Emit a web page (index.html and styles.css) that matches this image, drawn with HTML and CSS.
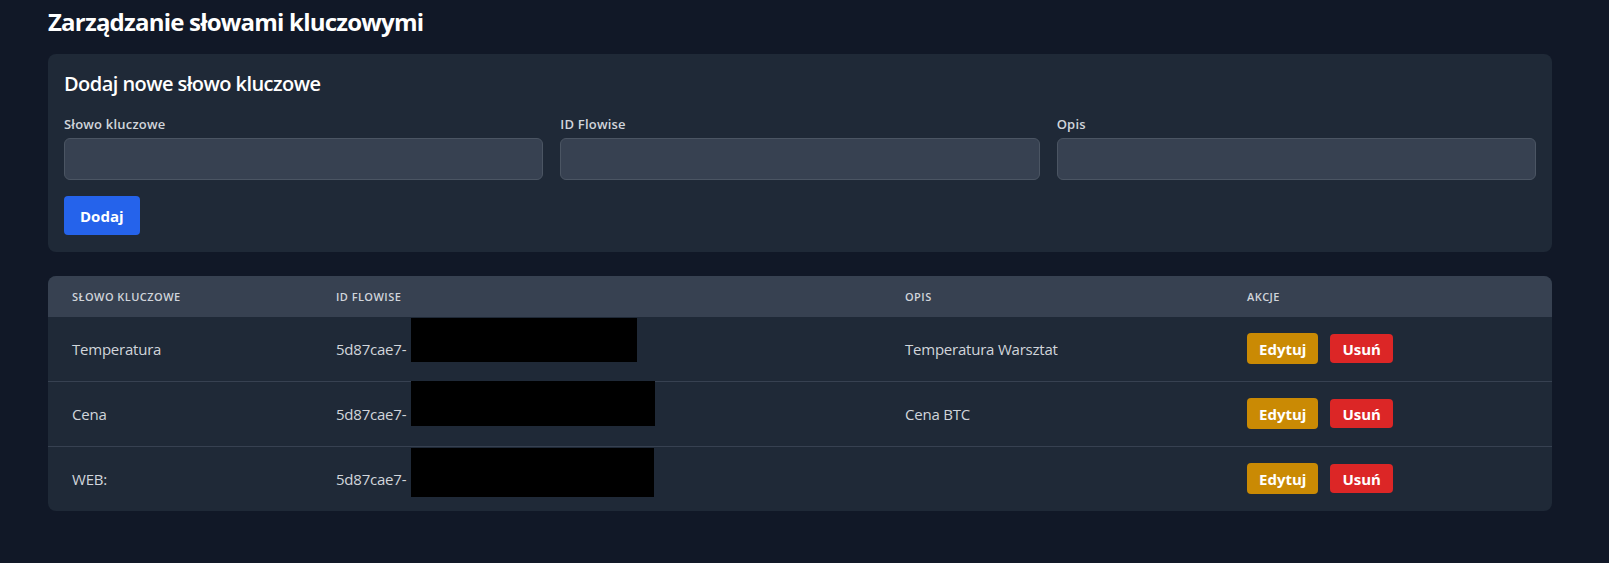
FILE: index.html
```html
<!DOCTYPE html>
<html lang="pl">
<head>
<meta charset="utf-8">
<title>Zarządzanie słowami kluczowymi</title>
<link rel="stylesheet" href="styles.css">
</head>
<body>
<main class="page">
  <h1 class="page-title">Zarządzanie słowami kluczowymi</h1>

  <section class="card form-card">
    <h2 class="card-title">Dodaj nowe słowo kluczowe</h2>
    <div class="form-grid">
      <div class="field">
        <label class="field-label" for="kw">Słowo kluczowe</label>
        <input class="field-input" id="kw" type="text">
      </div>
      <div class="field">
        <label class="field-label" for="fid">ID Flowise</label>
        <input class="field-input" id="fid" type="text">
      </div>
      <div class="field">
        <label class="field-label" for="desc">Opis</label>
        <input class="field-input" id="desc" type="text">
      </div>
    </div>
    <button class="btn btn-primary" type="button">Dodaj</button>
  </section>

  <section class="card table-card">
    <table class="kw-table">
      <thead>
        <tr>
          <th class="col-kw">Słowo kluczowe</th>
          <th class="col-id">ID Flowise</th>
          <th class="col-desc">Opis</th>
          <th class="col-act">Akcje</th>
        </tr>
      </thead>
      <tbody>
        <tr>
          <td>Temperatura</td>
          <td class="id-cell">5d87cae7-<span class="redact redact-1"></span></td>
          <td>Temperatura Warsztat</td>
          <td class="actions"><button class="btn-sm btn-edit" type="button">Edytuj</button><button class="btn-sm btn-del" type="button">Usuń</button></td>
        </tr>
        <tr>
          <td>Cena</td>
          <td class="id-cell">5d87cae7-<span class="redact redact-2"></span></td>
          <td>Cena BTC</td>
          <td class="actions"><button class="btn-sm btn-edit" type="button">Edytuj</button><button class="btn-sm btn-del" type="button">Usuń</button></td>
        </tr>
        <tr>
          <td>WEB:</td>
          <td class="id-cell">5d87cae7-<span class="redact redact-3"></span></td>
          <td></td>
          <td class="actions"><button class="btn-sm btn-edit" type="button">Edytuj</button><button class="btn-sm btn-del" type="button">Usuń</button></td>
        </tr>
      </tbody>
    </table>
  </section>
</main>
</body>
</html>
```

FILE: styles.css
```css
* { box-sizing: border-box; }

html, body {
  margin: 0;
  padding: 0;
  background: #111827;
  font-family: "Open Sans", "Noto Sans", "Liberation Sans", sans-serif;
  color: #d1d5db;
}

.page {
  padding: 6px 57px 40px 48px;
}

.page-title {
  margin: 0 0 16px;
  font-size: 24px;
  line-height: 32px;
  font-weight: 700;
  color: #ffffff;
  letter-spacing: -0.78px;
}

.card {
  background: #1f2937;
  border-radius: 8px;
}

.form-card {
  padding: 16px 16px 17px;
  margin-bottom: 24px;
}

.card-title {
  margin: 0 0 16px;
  font-size: 20px;
  line-height: 28px;
  font-weight: 600;
  color: #ffffff;
  letter-spacing: -0.55px;
}

.form-grid {
  display: grid;
  grid-template-columns: repeat(3, 1fr);
  gap: 17px;
  margin-bottom: 16px;
}

.field {
  display: flex;
  flex-direction: column;
}

.field-label {
  font-size: 13px;
  line-height: 20px;
  font-weight: 600;
  color: #d1d5db;
  margin-bottom: 4px;
  letter-spacing: 0.2px;
}

.field-input {
  height: 42px;
  background: #374151;
  border: 1px solid #4b5563;
  border-radius: 6px;
  color: #fff;
  font: inherit;
  padding: 8px 12px;
}

.btn {
  border: 0;
  font-family: inherit;
  cursor: pointer;
}

.btn-primary {
  display: block;
  height: 39px;
  padding: 0 16px;
  background: #2563eb;
  color: #ffffff;
  font-size: 15px;
  font-weight: 700;
  border-radius: 4px;
}

.table-card {
  overflow: hidden;
}

.kw-table {
  width: 100%;
  border-collapse: collapse;
  table-layout: fixed;
}

.kw-table th {
  background: #374151;
  text-align: left;
  font-size: 11px;
  line-height: 16px;
  font-weight: 600;
  text-transform: uppercase;
  color: #d1d5db;
  padding: 13px 24px 12px;
  letter-spacing: 0.45px;
}

.col-kw { width: 264px; }
.col-id { width: 569px; }
.col-desc { width: 342px; }
.col-act { width: auto; }

.kw-table td {
  padding: 16px 24px;
  height: 64px;
  font-size: 15px;
  line-height: 24px;
  color: #d1d5db;
  vertical-align: middle;
  white-space: nowrap;
  letter-spacing: -0.22px;
}

.kw-table tbody tr + tr td {
  border-top: 1px solid #374151;
  height: 65px;
}

.id-cell {
  position: relative;
}

.redact {
  position: absolute;
  left: 99px;
  background: #000;
}

.redact-1 { top: 1px; width: 226px; height: 44px; }
.redact-2 { top: -1px; width: 244px; height: 45px; }
.redact-3 { top: 1px; width: 243px; height: 49px; }

.btn-sm {
  display: inline-block;
  vertical-align: middle;
  border: 0;
  font-family: inherit;
  font-size: 15px;
  font-weight: 700;
  color: #ffffff;
  padding: 0 12px;
  border-radius: 4px;
  cursor: pointer;
  letter-spacing: 0;
}

.btn-edit {
  height: 31px;
  background: #ca8a04;
  margin-right: 12px;
}

.btn-del {
  height: 29px;
  background: #dc2626;
}
```
